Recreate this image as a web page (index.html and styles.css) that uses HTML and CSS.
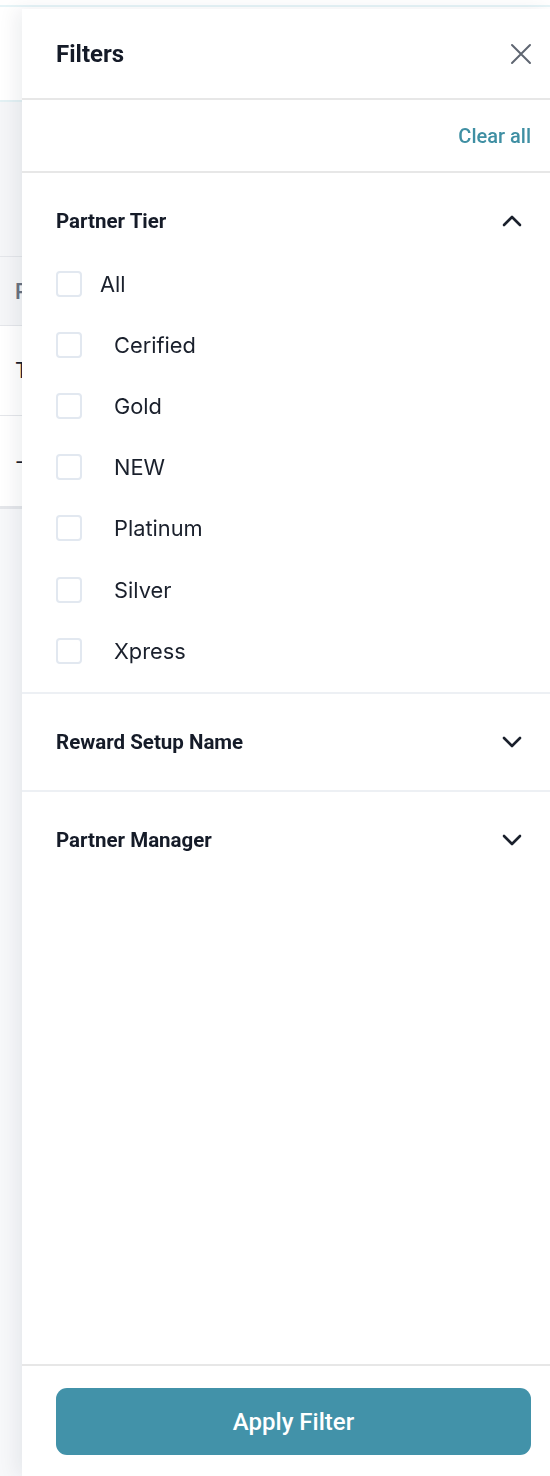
FILE: index.html
```html
<!DOCTYPE html>
<html>
<head>
<meta charset="utf-8">
<link rel="stylesheet" href="styles.css">
</head>
<body>
<div class="page">
  <div class="page-top"></div>
  <div class="page-header"></div>
  <div class="page-toolbar"></div>
  <div class="table">
    <div class="trow thead"><span>P</span></div>
    <div class="trow"><span>T</span></div>
    <div class="trow last"><span>-</span></div>
  </div>
</div>

<aside class="drawer">
  <div class="drawer-head">
    <h2 class="drawer-title">Filters</h2>
    <button class="close" aria-label="Close">
      <svg width="24" height="24" viewBox="0 0 24 24"><path d="M3 3 L21 21 M21 3 L3 21" stroke="#5f6671" stroke-width="2" fill="none" stroke-linecap="round"/></svg>
    </button>
  </div>
  <div class="clear-row"><a class="clear">Clear all</a></div>

  <section class="section open">
    <div class="section-head">
      <span class="section-title">Partner Tier</span>
      <svg class="chev" width="24" height="24" viewBox="0 0 24 24"><path d="M4 16 L12 8 L20 16" stroke="#1a202c" stroke-width="2.6" fill="none" stroke-linecap="round" stroke-linejoin="round"/></svg>
    </div>
    <ul class="options">
      <li class="opt"><span class="box"></span><span class="lbl first">All</span></li>
      <li class="opt"><span class="box"></span><span class="lbl">Cerified</span></li>
      <li class="opt"><span class="box"></span><span class="lbl">Gold</span></li>
      <li class="opt"><span class="box"></span><span class="lbl">NEW</span></li>
      <li class="opt"><span class="box"></span><span class="lbl">Platinum</span></li>
      <li class="opt"><span class="box"></span><span class="lbl">Silver</span></li>
      <li class="opt"><span class="box"></span><span class="lbl">Xpress</span></li>
    </ul>
  </section>

  <section class="section">
    <div class="section-head">
      <span class="section-title">Reward Setup Name</span>
      <svg class="chev" width="24" height="24" viewBox="0 0 24 24"><path d="M4 8 L12 16 L20 8" stroke="#1a202c" stroke-width="2.6" fill="none" stroke-linecap="round" stroke-linejoin="round"/></svg>
    </div>
  </section>

  <section class="section nob">
    <div class="section-head">
      <span class="section-title">Partner Manager</span>
      <svg class="chev" width="24" height="24" viewBox="0 0 24 24"><path d="M4 8 L12 16 L20 8" stroke="#1a202c" stroke-width="2.6" fill="none" stroke-linecap="round" stroke-linejoin="round"/></svg>
    </div>
  </section>

  <div class="spacer"></div>

  <div class="drawer-foot">
    <button class="apply">Apply Filter</button>
  </div>
</aside>
</body>
</html>
```

FILE: styles.css
```css
* { box-sizing: border-box; }
html, body { margin: 0; padding: 0; }
body {
  width: 550px;
  height: 1476px;
  overflow: hidden;
  background: #f7f8fa;
  font-family: Roboto, "Liberation Sans", sans-serif;
}

/* underlying page */
.page { width: 550px; }
.page-top { height: 7px; background: #fff; border-bottom: 2px solid #e6f4f7; }
.page-header { height: 95px; background: #fff; border-bottom: 2px solid #e3f1f4; }
.page-toolbar { height: 155px; background: #f5f6f8; border-bottom: 1px solid #e4e6ea; }
.table { background: #fff; border-bottom: 3px solid #e4e6ea; }
.trow {
  height: 90px;
  display: flex;
  align-items: center;
  padding-left: 15px;
  border-bottom: 1px solid #e4e6ea;
  font-family: Inter, sans-serif;
  font-size: 21px;
  color: #1a202c;
}
.trow.thead { height: 69px; background: #f5f6f8; color: #6b7280; font-weight: 600; }
.trow.last { border-bottom: none; }

/* drawer */
.drawer {
  position: fixed;
  top: 9px;
  left: 22px;
  width: 528px;
  bottom: 0;
  background: #fff;
  box-shadow: -6px 0 18px rgba(20, 30, 50, 0.07);
  display: flex;
  flex-direction: column;
}
.drawer-head {
  height: 91px;
  display: flex;
  align-items: center;
  justify-content: space-between;
  padding: 0 17px 0 34px;
  border-bottom: 2px solid #e7e7e7;
}
.drawer-title {
  margin: 0;
  font-size: 24px;
  font-weight: 700;
  color: #151b28;
}
.close {
  border: 0;
  background: none;
  padding: 0;
  width: 24px;
  height: 24px;
  display: flex;
}
.clear-row {
  height: 73px;
  display: flex;
  align-items: center;
  justify-content: flex-end;
  padding: 0 19px 0 34px;
  border-bottom: 2px solid #e7e7e7;
}
.clear {
  font-size: 20px;
  font-weight: 500;
  color: #3f8fa3;
}

.section {
  border-bottom: 2px solid #edf0f4;
  padding: 36px 0 36px;
}
.section.open { padding-bottom: 11px; }
.section.nob { border-bottom: none; }
.section-head {
  height: 24px;
  display: flex;
  align-items: center;
  justify-content: space-between;
  padding: 0 26px 0 34px;
}
.section-title {
  font-size: 20.5px;
  font-weight: 700;
  color: #151b28;
}
.chev { display: block; }

.options {
  list-style: none;
  margin: 20px 0 0;
  padding: 0 34px;
}
.opt {
  height: 61.2px;
  display: flex;
  align-items: center;
}
.box {
  width: 26px;
  height: 26px;
  border: 2px solid #e2e8f0;
  border-radius: 4px;
  flex: none;
}
.lbl {
  margin-left: 32px;
  font-family: Inter, sans-serif;
  font-size: 21.8px;
  color: #1a202c;
}
.lbl.first { margin-left: 18px; }

.spacer { flex: 1; }

.drawer-foot {
  border-top: 2px solid #e7e7e7;
  padding: 22px 19px 21px 34px;
}
.apply {
  width: 100%;
  height: 67px;
  border: 0;
  border-radius: 11px;
  background: #4292a9;
  color: #fff;
  font-family: Roboto, sans-serif;
  font-size: 24px;
  font-weight: 500;
}
```
